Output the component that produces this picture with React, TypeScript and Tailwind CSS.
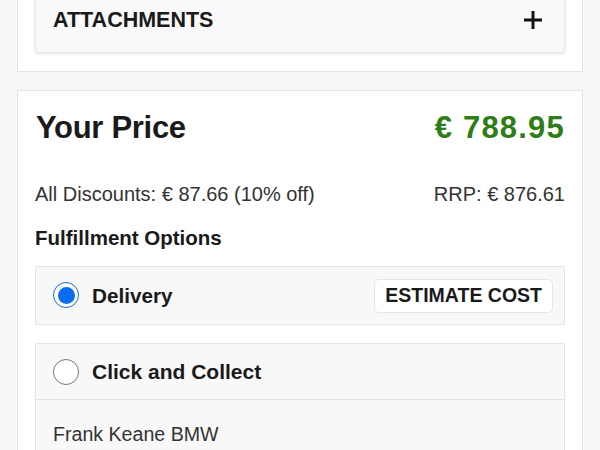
import React from "react";

export default function App() {
  return (
    <div className="min-h-[450px] bg-[#f8f8f8] overflow-hidden" style={{ fontFamily: '"Liberation Sans", Arial, sans-serif' }}>
      <div className="-mt-[32px] px-[17px] flex flex-col gap-[18px]">
        <div className="bg-white border border-[#e4e4e4] px-[17px] pt-[18px] pb-[18px]">
          <div className="h-[66px] bg-[#f9f9f9] border border-[#e8e8e8] rounded-[4px] shadow-[0_1px_3px_rgba(0,0,0,0.12)] flex items-center justify-between pl-[17px] pr-[21px]">
            <span className="text-[21.5px] font-bold text-[#1a1a1a]">ATTACHMENTS</span>
            <svg width="20" height="20" viewBox="0 0 20 20">
              <path d="M10 1v18M1 10h18" stroke="#111" strokeWidth="3" />
            </svg>
          </div>
        </div>
        <div className="bg-white border border-[#e4e4e4] px-[17px] pt-[20px] pb-[20px]">
          <div className="flex items-center justify-between h-[34px]">
            <span className="text-[31px] font-bold text-[#1a1a1a] tracking-[-0.3px] pl-[1px]">Your Price</span>
            <span className="text-[31px] font-bold text-[#2f7d17] tracking-[1.2px]">€ 788.95</span>
          </div>
          <div className="flex items-center justify-between mt-[36px] h-[26px] text-[20px] text-[#333]">
            <span>All Discounts: € 87.66 (10% off)</span>
            <span>RRP: € 876.61</span>
          </div>
          <div className="mt-[18px] h-[26px] flex items-center text-[20.5px] font-bold text-[#1a1a1a]">
            Fulfillment Options
          </div>
          <div className="mt-[15px] h-[59px] bg-[#f8f8f8] border border-[#e4e4e4] flex items-center justify-between pl-[17px] pr-[11px]">
            <div className="flex items-center gap-[13px]">
              <div className="w-[26px] h-[26px] rounded-full border-[1.5px] border-[#1769e0] bg-white flex items-center justify-center">
                <div className="w-[17px] h-[17px] rounded-full bg-[#0a6cf0]" />
              </div>
              <span className="text-[20.7px] font-bold text-[#1a1a1a]">Delivery</span>
            </div>
            <button className="h-[34px] px-[10px] bg-white border border-[#e6e6e6] rounded-[5px] text-[19.5px] font-bold text-[#1a1a1a]">
              ESTIMATE COST
            </button>
          </div>
          <div className="mt-[18px] bg-[#f8f8f8] border border-[#e4e4e4]">
            <div className="h-[56px] border-b border-[#e4e4e4] flex items-center gap-[13px] pl-[17px]">
              <div className="w-[26px] h-[26px] rounded-full border-[1.5px] border-[#777] bg-white" />
              <span className="text-[21px] font-bold text-[#1a1a1a]">Click and Collect</span>
            </div>
            <div className="pl-[17px] pt-[20px] pb-[20px] text-[19.6px] text-[#333]">
              Frank Keane BMW
            </div>
          </div>
        </div>
      </div>
    </div>
  );
}
